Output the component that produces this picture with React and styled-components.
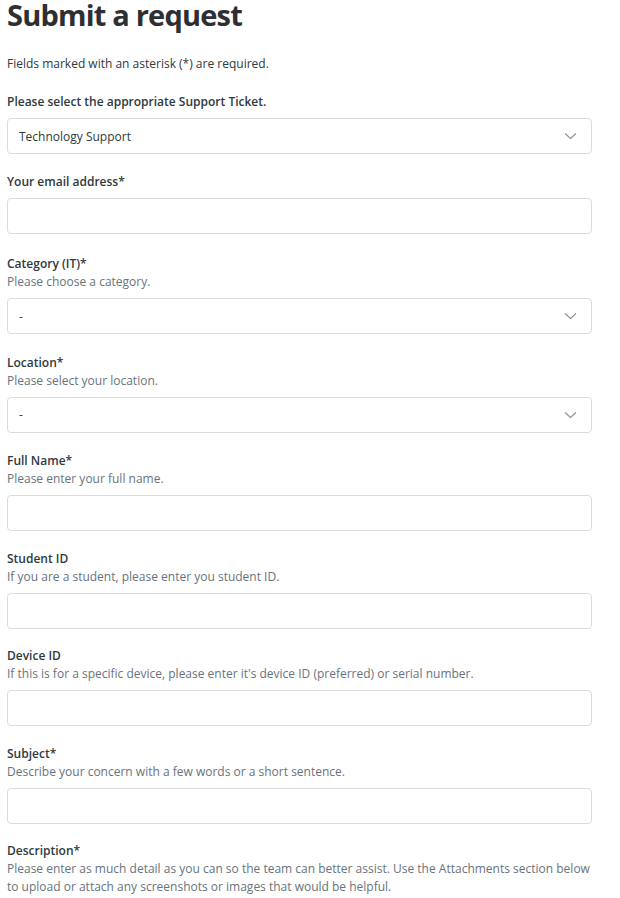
import React from 'react';
import styled, { createGlobalStyle } from 'styled-components';

const GlobalStyle = createGlobalStyle`
    html, body {
        margin: 0;
        padding: 0;
        background: #ffffff;
    }
    body {
        font-family: "Open Sans", "Noto Sans", Arial, sans-serif;
        color: #2f3941;
    }
`;

const Page = styled.div`
    width: 586px;
    padding: 0 0 0 7px;
`;

const Title = styled.h1`
    margin: -3px 0 0 0;
    font-size: 29px;
    line-height: 36px;
    font-weight: 700;
    letter-spacing: -0.8px;
    color: #2d2f31;
`;

const Note = styled.p`
    margin: 22px 0 0 0;
    font-size: 12px;
    line-height: 18px;
    color: #2f3941;
`;

const Field = styled.div`
    display: flex;
    flex-direction: column;
    margin-top: ${(p) => p.top || 19}px;
`;

const Label = styled.label`
    font-size: 12px;
    line-height: 18px;
    font-weight: 600;
    color: #2f3941;
`;

const Hint = styled.div`
    font-size: 12px;
    line-height: 18px;
    color: #68737d;
`;

const Box = styled.div`
    display: flex;
    align-items: center;
    justify-content: space-between;
    box-sizing: border-box;
    width: 585px;
    height: 36px;
    margin-top: 7px;
    padding: 0 14px 0 11px;
    border: 1px solid #d8dcde;
    border-radius: 4px;
    font-size: 12px;
    color: #2f3941;
`;

const Chevron = () => (
    <svg width="13" height="8" viewBox="0 0 13 8">
        <path d="M1 1.5 L6.5 6.5 L12 1.5" fill="none" stroke="#87929d" strokeWidth="1.1" />
    </svg>
);

const fields = [
    { label: 'Your email address*' },
    { label: 'Category (IT)*', hint: 'Please choose a category.', select: '-', top: 21 },
    { label: 'Location*', hint: 'Please select your location.', select: '-', top: 19.5 },
    { label: 'Full Name*', hint: 'Please enter your full name.' },
    { label: 'Student ID', hint: 'If you are a student, please enter you student ID.' },
    {
        label: 'Device ID',
        hint: "If this is for a specific device, please enter it's device ID (preferred) or serial number.",
        top: 18.5,
    },
    { label: 'Subject*', hint: 'Describe your concern with a few words or a short sentence.', top: 18.5 },
];

const App = () => {
    return (
        <>
            <GlobalStyle />
            <Page>
                <Title>Submit a request</Title>
                <Note>Fields marked with an asterisk (*) are required.</Note>
                <Field top={20}>
                    <Label>Please select the appropriate Support Ticket.</Label>
                    <Box>
                        <span>Technology Support</span>
                        <Chevron />
                    </Box>
                </Field>
                {fields.map((f) => (
                    <Field key={f.label} top={f.top}>
                        <Label>{f.label}</Label>
                        {f.hint && <Hint>{f.hint}</Hint>}
                        <Box>
                            {f.select && <span>{f.select}</span>}
                            {f.select && <Chevron />}
                        </Box>
                    </Field>
                ))}
                <Field top={18.5}>
                    <Label>Description*</Label>
                    <Hint>
                        Please enter as much detail as you can so the team can better assist. Use the Attachments
                        section below to upload or attach any screenshots or images that would be helpful.
                    </Hint>
                </Field>
            </Page>
        </>
    );
};

export default App;
